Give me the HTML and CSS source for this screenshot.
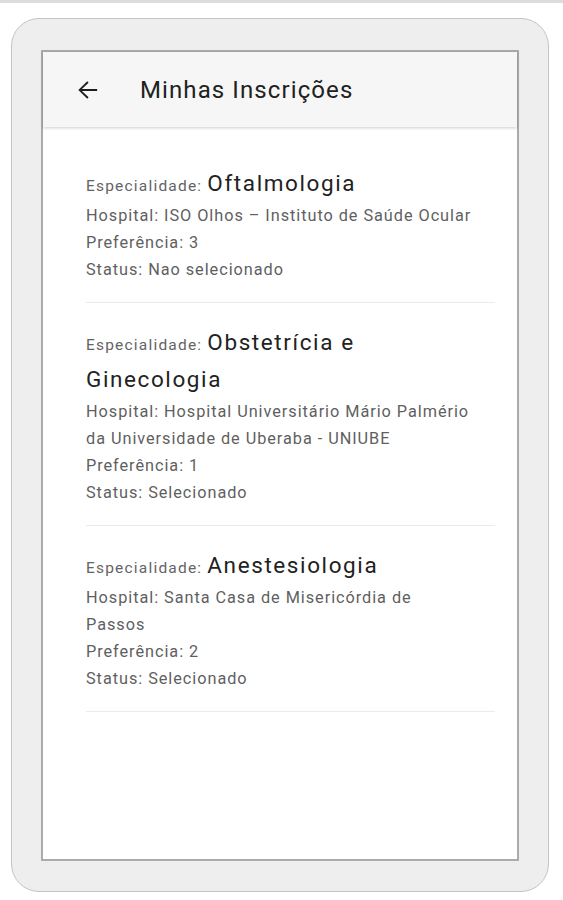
FILE: index.html
```html
<!DOCTYPE html>
<html lang="pt-BR">
<head>
    <meta charset="UTF-8">
    <meta name="viewport" content="width=device-width, initial-scale=1.0">
    <title>Minhas Inscrições</title>
    <link rel="stylesheet" href="styles.css">
</head>
<body>
    <div class="top-line"></div>
    <div class="device">
        <div class="screen">
            <header class="app-bar">
                <button class="back-button" aria-label="Voltar">
                    <svg viewBox="0 0 24 24" width="29" height="28" preserveAspectRatio="none">
                        <path d="M20 11.2H7.4l5.5-5.5L11.8 4.6 4.4 12l7.4 7.4 1.1-1.1-5.5-5.5H20z"/>
                    </svg>
                </button>
                <h1>Minhas Inscrições</h1>
            </header>

            <ul class="subscription-list">
                <li class="subscription">
                    <div class="specialty"><span class="label">Especialidade: </span>Oftalmologia</div>
                    <div class="detail">Hospital: ISO Olhos – Instituto de Saúde Ocular</div>
                    <div class="detail">Preferência: 3</div>
                    <div class="detail">Status: Nao selecionado</div>
                </li>
                <li class="subscription">
                    <div class="specialty"><span class="label">Especialidade: </span>Obstetrícia e Ginecologia</div>
                    <div class="detail">Hospital: Hospital Universitário Mário Palmério da Universidade de Uberaba - UNIUBE</div>
                    <div class="detail">Preferência: 1</div>
                    <div class="detail">Status: Selecionado</div>
                </li>
                <li class="subscription">
                    <div class="specialty"><span class="label">Especialidade: </span>Anestesiologia</div>
                    <div class="detail">Hospital: Santa Casa de Misericórdia de Passos</div>
                    <div class="detail">Preferência: 2</div>
                    <div class="detail">Status: Selecionado</div>
                </li>
            </ul>
        </div>
    </div>
</body>
</html>
```

FILE: styles.css
```css
/* Global styles */
body {
    margin: 0;
    background: #fff;
    font-family: Roboto, 'Noto Sans', sans-serif;
}

.top-line {
    height: 3px;
    background: #dcdcdc;
}

/* Device frame */
.device {
    margin: 15px 14px 0 11px;
    height: 811px;
    padding: 31px 29px 30px 29px;
    background: #eeeeee;
    border: 1px solid #c4c4c4;
    border-radius: 28px;
}

.screen {
    height: 100%;
    background: #fff;
    border: 2px solid #ababab;
    box-sizing: border-box;
    display: flex;
    flex-direction: column;
}

/* App bar */
.app-bar {
    height: 75px;
    flex-shrink: 0;
    display: flex;
    align-items: center;
    padding-left: 22px;
    background: #f6f6f6;
    box-shadow: 0 1px 3px rgba(0, 0, 0, 0.2);
    position: relative;
}

.back-button {
    width: 44px;
    height: 44px;
    padding: 0;
    border: none;
    background: none;
    display: flex;
    align-items: center;
    justify-content: center;
    cursor: pointer;
}

.back-button svg {
    fill: #1e1e1e;
}

.app-bar h1 {
    margin: 0 0 0 31px;
    font-size: 24px;
    font-weight: 400;
    letter-spacing: 1.1px;
    color: #212121;
}

/* List */
.subscription-list {
    list-style: none;
    margin: 0;
    padding: 17px 22px 0 43px;
}

.subscription {
    padding: 21px 0 19px;
    border-bottom: 1px solid #ebebeb;
}

.specialty {
    font-size: 22.5px;
    line-height: 37px;
    letter-spacing: 1.6px;
    color: #222;
    padding-right: 22px;
}

.specialty .label {
    font-size: 15.5px;
    line-height: 1;
    letter-spacing: 1.2px;
    color: #646464;
}

.detail {
    font-size: 16.3px;
    line-height: 27px;
    letter-spacing: 0.95px;
    color: #5f5f5f;
    padding-right: 22px;
}
```
